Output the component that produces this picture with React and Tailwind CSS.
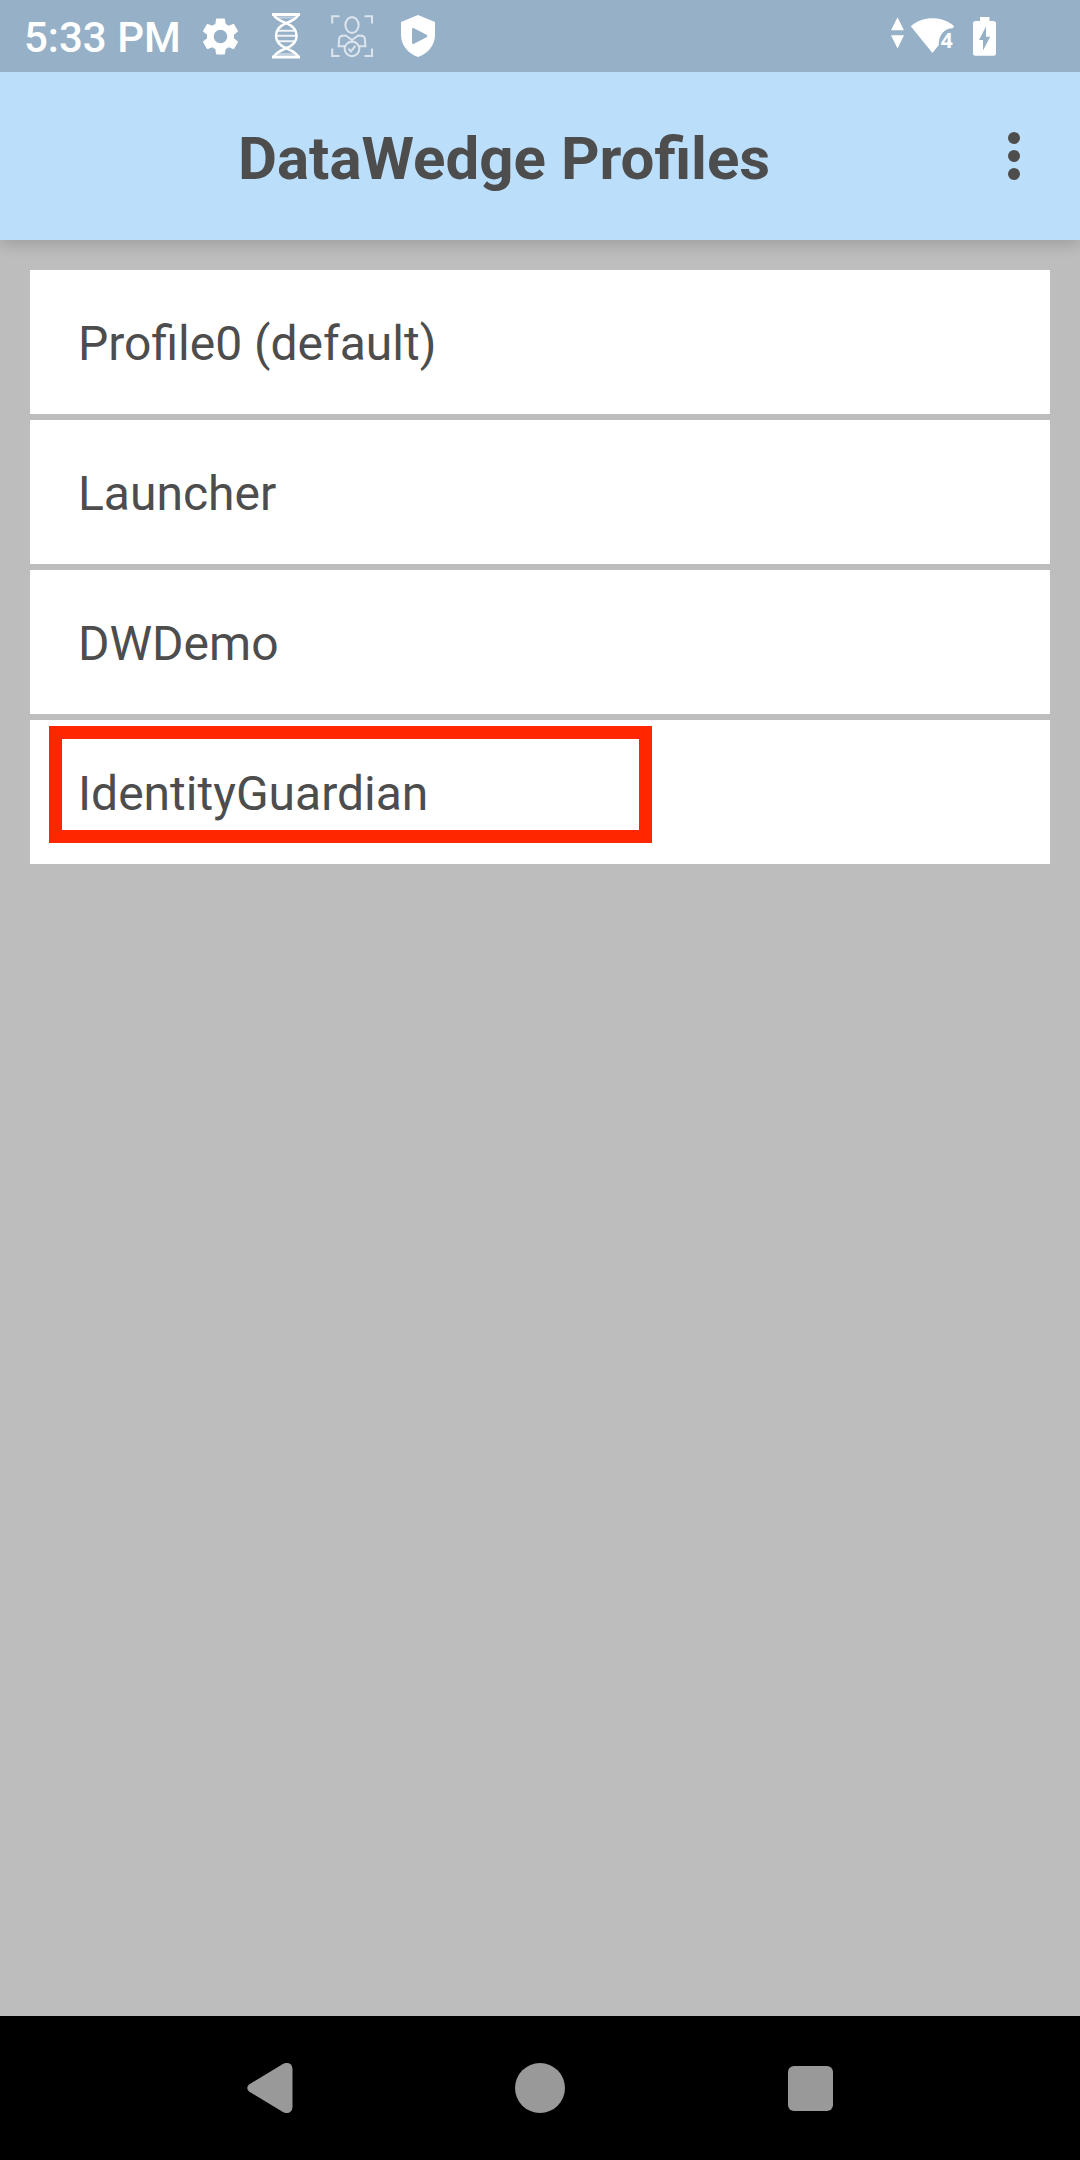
import React from "react";

const profiles = ["Profile0 (default)", "Launcher", "DWDemo", "IdentityGuardian"];

function GearIcon() {
  return (
    <svg className="h-[45px] w-[45px]" viewBox="0 0 24 24" fill="#fff">
      <path d="M19.14 12.94c.04-.3.06-.61.06-.94 0-.32-.02-.64-.07-.94l2.03-1.58c.18-.14.23-.41.12-.61l-1.92-3.32c-.12-.22-.37-.29-.59-.22l-2.39.96c-.5-.38-1.03-.7-1.62-.94l-.36-2.54c-.04-.24-.24-.41-.48-.41h-3.84c-.24 0-.43.17-.47.41l-.36 2.54c-.59.24-1.13.57-1.62.94l-2.39-.96c-.22-.08-.47 0-.59.22L2.74 8.87c-.12.21-.08.47.12.61l2.03 1.58c-.05.3-.09.63-.09.94s.02.64.07.94l-2.03 1.58c-.18.14-.23.41-.12.61l1.92 3.32c.12.22.37.29.59.22l2.39-.96c.5.38 1.03.7 1.62.94l.36 2.54c.05.24.24.41.48.41h3.84c.24 0 .44-.17.47-.41l.36-2.54c.59-.24 1.13-.56 1.62-.94l2.39.96c.22.08.47 0 .59-.22l1.92-3.32c.12-.22.07-.47-.12-.61l-2.01-1.58zM12 15.6c-1.980 0-3.6-1.620-3.6-3.600s1.620-3.600 3.600-3.600 3.600 1.620 3.600 3.600-1.620 3.600-3.600 3.600z" />
    </svg>
  );
}

function DnaIcon() {
  return (
    <svg className="h-[46px] w-[30px]" viewBox="0 0 30 46" fill="none" stroke="#fff" strokeWidth="2">
      <path d="M1 1.500h28M1 44h28" strokeWidth="3" />
      <path
        d="M3 2C4.500 6 10 8 15.300 10.200C22 13 25.600 17 25.600 22.700C25.600 28.500 22 32.500 15.300 35.200C10 37.500 4.500 39.500 3 44M27 2C25.500 6 20.500 8 15.300 10.200C8.500 13 5 17 5 22.700C5 28.500 8.500 32.500 15.300 35.200C20.500 37.500 25.500 39.500 27 44"
        strokeWidth="2.500"
      />
      <path d="M6 17.700h18.500M5 22.700h20.500M6 28.200h18.500" strokeOpacity=".85" />
      <path d="M6 4.500h18M6 41h18" strokeOpacity=".4" />
    </svg>
  );
}

function PersonScanIcon() {
  return (
    <svg className="h-[44px] w-[44px]" viewBox="0 0 44 44" fill="none" stroke="#fff" strokeOpacity=".66" strokeWidth="2.100">
      <path d="M2.200 9.500V2.200h7.300M34.500 2.200H42v7.300M42 34.500V42h-7.500M9.500 42H2.200v-7.500" />
      <ellipse cx="22" cy="11" rx="6.600" ry="7.900" />
      <path d="M14.500 32.300H8.600L9.200 24.500Q9.500 22.300 11.500 21.900L15.800 21.500L22 26L28.200 21.500L32.500 21.900Q34.500 22.300 34.800 24.500L35.400 32.300H29.500" />
      <circle cx="22" cy="34.900" r="7.300" />
      <path d="M18.500 34.800l2.500 2.600 4.200-5.600" />
    </svg>
  );
}

function ShieldIcon() {
  return (
    <svg className="h-[42px] w-[34px]" viewBox="0 0 34 42">
      <path d="M17 0L34 7V20C34 30 27 38.500 17 42C7 38.500 0 30 0 20V7Z" fill="#fff" />
      <path d="M11 14.500q0-2 2-1.300l12.600 6.600q1.500 1.200 0 2.400L13 28.800q-2 .7-2-1.300z" fill="#95b0c7" />
    </svg>
  );
}

function WifiIcon() {
  return (
    <svg className="h-[40px] w-[66px]" viewBox="0 0 66 40" fill="#fff">
      <path d="M7.500 1.200L14 14.200H1zM1 19.200H14L7.500 32.500z" />
      <path d="M20.800 10.200C33 -.4 52 -.4 64.200 10.200L62.800 12.200C54 12.200 48.700 19 48.700 29.200L42.400 37z" />
      <text x="50.800" y="31.700" fontSize="21" fontWeight="700" fontFamily="Open Sans, sans-serif" textLength="12" lengthAdjust="spacingAndGlyphs">4</text>
    </svg>
  );
}

function BatteryIcon() {
  return (
    <svg className="h-[39px] w-[23px]" viewBox="0 0 23 39">
      <path d="M7 0h9.500v4H20.500Q23 4 23 6.500V36.300Q23 38.800 20.500 38.800H2.500Q0 38.800 0 36.300V6.500Q0 4 2.500 4H7z" fill="#fff" />
      <path d="M13 9.500v10.300h4.200L10 33.500V23H6z" fill="#95b0c7" />
    </svg>
  );
}

function IconSlot({ children }) {
  return <div className="flex h-[72px] w-[66px] items-center justify-center">{children}</div>;
}

export default function App() {
  return (
    <div className="flex h-[2160px] w-[1080px] flex-col overflow-hidden bg-[#bdbdbd] font-['Roboto',sans-serif] text-[#4d4d4d]">
      <div className="z-20 flex h-[72px] shrink-0 items-center bg-[#95b0c7] pl-[24px] pr-[84px]">
        <span className="w-[163px] whitespace-nowrap pt-[3px] text-[42px] font-medium leading-[50px] text-white">5:33 PM</span>
        <IconSlot><GearIcon /></IconSlot>
        <IconSlot><DnaIcon /></IconSlot>
        <IconSlot><PersonScanIcon /></IconSlot>
        <IconSlot><ShieldIcon /></IconSlot>
        <div className="ml-auto flex items-center gap-[17px]">
          <WifiIcon />
          <BatteryIcon />
        </div>
      </div>

      <header className="z-10 flex h-[168px] shrink-0 items-center justify-between bg-[#bbdefb] pl-[238px] pr-[60px] shadow-[0_5px_14px_rgba(0,0,0,0.16)]">
        <h1 className="whitespace-nowrap pt-[5px] text-[60px] font-bold leading-[70px]">DataWedge Profiles</h1>
        <div className="flex flex-col gap-[6px]">
          <span className="h-[12px] w-[12px] rounded-full bg-[#4d4d4d]" />
          <span className="h-[12px] w-[12px] rounded-full bg-[#4d4d4d]" />
          <span className="h-[12px] w-[12px] rounded-full bg-[#4d4d4d]" />
        </div>
      </header>

      <main className="flex grow flex-col gap-[6px] p-[30px]">
        {profiles.map((name) => (
          <div key={name} className="relative flex h-[144px] items-center bg-white pl-[48px] pt-[3px] text-[48px] leading-[56px]">
            {name}
            {name === "IdentityGuardian" && (
              <div className="absolute left-[19px] top-[6px] h-[117px] w-[603px] border-[13px] border-[#ff2600]" />
            )}
          </div>
        ))}
      </main>

      <nav className="flex h-[144px] shrink-0 items-center justify-center bg-black">
        <div className="flex w-[270px] justify-center">
          <svg className="h-[50px] w-[46px]" viewBox="0 0 46 50" fill="#999">
            <path d="M2 21.500L35.500 1.200Q40 -1.500 43.500 1.200Q45.500 2.800 45.500 6V44Q45.500 47.200 43.500 48.800Q40 51.500 35.500 48.800L2 28.500Q-1.500 25 2 21.500z" />
          </svg>
        </div>
        <div className="flex w-[270px] justify-center">
          <div className="h-[50px] w-[50px] rounded-full bg-[#999]" />
        </div>
        <div className="flex w-[270px] justify-center">
          <div className="h-[45px] w-[45px] rounded-[6px] bg-[#999]" />
        </div>
      </nav>
    </div>
  );
}
